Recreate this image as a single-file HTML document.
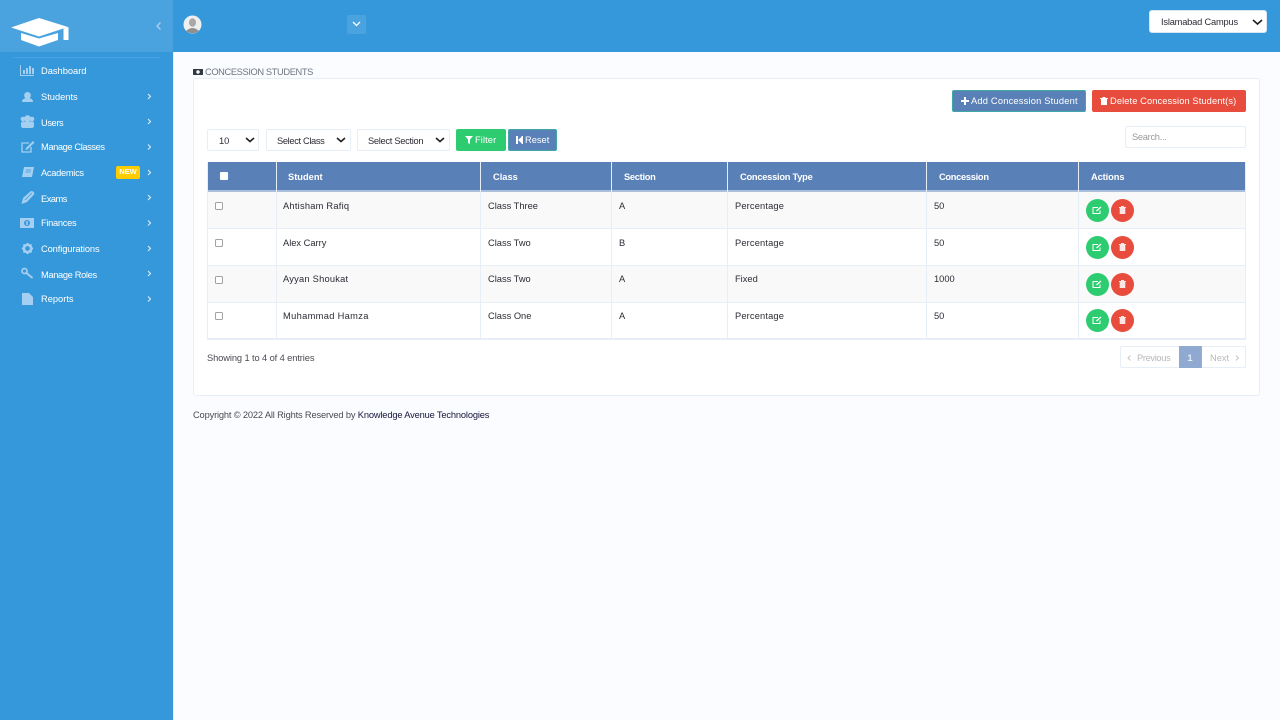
<!DOCTYPE html>
<html><head><meta charset="utf-8"><title>Concession Students</title>
<style>
*{box-sizing:border-box}
html,body{margin:0;padding:0}
body{width:1280px;height:720px;overflow:hidden;background:#fafcff;font-family:"Liberation Sans",sans-serif;font-size:9.3px;color:#2b2b35;position:relative}
.a{position:absolute}
.t{position:absolute;white-space:nowrap;line-height:14px}
.m{color:#fff}
.sel{position:absolute;background:#fff;border:1px solid #e8eef5;border-radius:2px}
.th{position:absolute;top:170px;color:#fff;font-weight:bold;line-height:14px;white-space:nowrap}
.ck{position:absolute;width:8px;height:8px;border:1px solid #a2a2a2;border-radius:1.5px;background:#fff;left:215px}
.c{position:absolute;width:23px;height:23px;border-radius:50%}
svg{position:absolute;overflow:visible}
.i{fill:#a5cff0}
.ch{fill:none;stroke:#dcecf8;stroke-width:1.1}
.sc{fill:none;stroke:#222;stroke-width:1.6}
</style></head><body>

<!-- sidebar -->
<div class="a" style="left:0;top:0;width:173px;height:720px;background:#3498db"></div>
<div class="a" style="left:0;top:0;width:173px;height:52px;background:#4aa3df"></div>
<div class="a" style="left:13px;top:57px;width:147px;height:1px;background:#45a2e2"></div>
<div class="a" style="left:173px;top:52px;width:1px;height:668px;background:#e4ecf4"></div>
<!-- header -->
<div class="a" style="left:173px;top:0;width:1107px;height:52px;background:#3498db"></div>

<svg style="left:0;top:0" width="90" height="52">
<path fill="#fff" d="M11 27.500 L39 18 L68 27 L39 36.500Z"/>
<path fill="#fff" d="M21 33 L39 38.500 L58 33 L58 40 L39 46.500 L21 40Z"/>
<path fill="#fff" d="M63.500 28.500 L68.500 27 V40 H63.500Z"/>
</svg>
<svg style="left:155px;top:21px" width="8" height="10"><path d="M5.500 1.500 L2 5 L5.500 8.500" fill="none" stroke="#a9d3f0" stroke-width="1.300"/></svg>

<!-- avatar -->
<svg style="left:183px;top:15px" width="19" height="19"><circle cx="9.500" cy="9.500" r="9" fill="#efefef"/><ellipse cx="9.500" cy="7.500" rx="3.500" ry="4.300" fill="#a8a8a8"/><path d="M3 16 Q9.500 10 16 16 Q9.500 20.500 3 16Z" fill="#8f8f8f"/></svg>
<div class="a" style="left:347px;top:15px;width:19px;height:19px;background:#4aa3df;border-radius:2px"></div>
<svg style="left:352px;top:21px" width="9" height="6"><path d="M1 1 L4.500 4.500 L8 1" fill="none" stroke="#fff" stroke-width="1.300"/></svg>

<!-- campus select -->
<div class="a" style="left:1149px;top:10px;width:118px;height:23px;background:#fff;border:1px solid #d7e6f2;border-radius:3px"></div>
<div class="t" style="left:1161px;top:15px;letter-spacing:-.2px">Islamabad Campus</div>
<svg style="left:1252px;top:18.500px" width="11" height="7"><path class="sc" d="M1 1 L5.500 5 L10 1"/></svg>

<!-- sidebar items -->
<div class="t m" style="left:41px;top:64px">Dashboard</div>
<div class="t m" style="left:41px;top:90px">Students</div>
<div class="t m" style="left:41px;top:116px;letter-spacing:-.4px">Users</div>
<div class="t m" style="left:41px;top:140px;letter-spacing:-.4px">Manage Classes</div>
<div class="t m" style="left:41px;top:166px;letter-spacing:-.3px">Academics</div>
<div class="t m" style="left:41px;top:192px;letter-spacing:-.5px">Exams</div>
<div class="t m" style="left:41px;top:216px;letter-spacing:-.3px">Finances</div>
<div class="t m" style="left:41px;top:242px;letter-spacing:-.1px">Configurations</div>
<div class="t m" style="left:41px;top:268px;letter-spacing:-.35px">Manage Roles</div>
<div class="t m" style="left:41px;top:292px">Reports</div>

<div class="a" style="left:116px;top:166px;width:24px;height:13px;background:#fc0;border-radius:2px;color:#fff;font-size:7.500px;font-weight:bold;text-align:center;line-height:12px">NEW</div>

<svg style="left:0;top:55px" width="173" height="260">
<!-- dashboard -->
<path fill="none" stroke="#a5cff0" d="M20.500 10 V20.500 H34"/>
<path class="i" d="M23 15h2v4h-2zM26 13h2v6h-2zM29 11h2v8h-2zM32 13h2v6h-2z"/>
<!-- students -->
<circle class="i" cx="27.500" cy="40.400" r="3.400"/><path class="i" d="M22 47 Q22 43 27.500 43 Q33 43 33 47Z"/>
<!-- users -->
<circle class="i" cx="27.500" cy="63.500" r="3.300"/><circle class="i" cx="23" cy="64" r="2.300"/><circle class="i" cx="32" cy="64" r="2.300"/><path class="i" d="M21 69 Q21 66 24 66.500 H31 Q34 66 34 69 V71 Q34 73 31 73 H24 Q21 73 21 71Z"/>
<!-- manage classes -->
<g transform="translate(0,2)"><path fill="none" stroke="#a5cff0" stroke-width="1.300" d="M31 90 V95 H22 V86 H29"/><path class="i" d="M26 91 L33 84 L34.500 85.500 L27.500 92.500 L25.500 93Z"/></g>
<!-- academics -->
<path class="i" d="M24 112 H34 L32 122 H22 Z"/><path fill="none" stroke="#3498db" stroke-width=".7" d="M26 115 H31 M25.500 117 H30.500"/>
<!-- exams -->
<path class="i" d="M21.500 149 L23 143 L31 136 Q34 136 34.500 139 L27 147Z"/><path fill="none" stroke="#3498db" stroke-width=".7" d="M25 145 L32 138"/>
<!-- finances -->
<rect class="i" x="20" y="163" width="14" height="10"/><circle cx="27" cy="168" r="3" fill="#3498db"/><rect x="26.200" y="166" width="1.500" height="4" fill="#a5cff0"/>
<!-- config -->
<circle cx="27.500" cy="193.500" r="3.600" fill="none" stroke="#a5cff0" stroke-width="2.500"/><circle class="i" cx="27.500" cy="189" r="1.200"/><circle class="i" cx="27.500" cy="198" r="1.200"/><circle class="i" cx="23" cy="193.500" r="1.200"/><circle class="i" cx="32" cy="193.500" r="1.200"/><circle class="i" cx="24.300" cy="190.300" r="1.200"/><circle class="i" cx="30.700" cy="190.300" r="1.200"/><circle class="i" cx="24.300" cy="196.700" r="1.200"/><circle class="i" cx="30.700" cy="196.700" r="1.200"/>
<!-- roles -->
<circle cx="24.500" cy="216" r="2.500" fill="none" stroke="#a5cff0" stroke-width="1.700"/><path fill="none" stroke="#a5cff0" stroke-width="2" d="M26.500 218 L32.500 223"/>
<!-- reports -->
<path class="i" d="M22 238 H29 L33 242 V250 H22Z"/>
<g class="ch">
<path d="M148 39 L150.500 41.500 L148 44"/>
<path d="M148 64 L150.500 66.500 L148 69"/>
<path d="M148 89.500 L150.500 92 L148 94.500"/>
<path d="M148 115 L150.500 117.500 L148 120"/>
<path d="M148 140 L150.500 142.500 L148 145"/>
<path d="M148 165.500 L150.500 168 L148 170.500"/>
<path d="M148 191 L150.500 193.500 L148 196"/>
<path d="M148 216 L150.500 218.500 L148 221"/>
<path d="M148 241.500 L150.500 244 L148 246.500"/>
</g>
</svg>

<!-- title -->
<svg style="left:193px;top:69px" width="10" height="6"><rect width="10" height="6" rx=".5" fill="#2f3a45"/><circle cx="5" cy="3" r="1.700" fill="#fff"/></svg>
<div class="t" style="left:205px;top:65px;color:#6f7680;letter-spacing:-.38px">CONCESSION STUDENTS</div>

<!-- card -->
<div class="a" style="left:193px;top:78px;width:1067px;height:318px;background:#fff;border:1px solid #e8eef5;border-radius:3px"></div>

<!-- top buttons -->
<div class="a" style="left:952px;top:90px;width:134px;height:22px;background:#5a80b8;border:1px solid #3fa7a5;border-radius:2px"></div>
<svg style="left:961px;top:97px" width="8" height="8"><path fill="#fff" d="M3 0h2v3h3v2H5v3H3V5H0V3h3z"/></svg>
<div class="t" style="left:971px;top:94px;color:#fff;letter-spacing:.2px">Add Concession Student</div>
<div class="a" style="left:1092px;top:90px;width:154px;height:22px;background:#e74c3c;border-radius:2px"></div>
<svg style="left:1100px;top:97px" width="8" height="8"><path fill="#fff" d="M0 1h8v1H7v6H1V2H0zM2.500 0h3v1h-3z"/></svg>
<div class="t" style="left:1110px;top:94px;color:#fff;letter-spacing:.1px">Delete Concession Student(s)</div>

<!-- search -->
<div class="sel" style="left:1125px;top:126px;width:121px;height:22px"></div>
<div class="t" style="left:1132px;top:130px;color:#9a9a9a;letter-spacing:-.3px">Search...</div>

<!-- filters -->
<div class="sel" style="left:207px;top:129px;width:52px;height:22px"></div>
<div class="t" style="left:219px;top:134px">10</div>
<svg style="left:245px;top:137px" width="10" height="6"><path class="sc" d="M1 1 L5 4.500 L9 1"/></svg>
<div class="sel" style="left:266px;top:129px;width:85px;height:22px"></div>
<div class="t" style="left:277px;top:134px;letter-spacing:-.35px">Select Class</div>
<svg style="left:336px;top:137px" width="10" height="6"><path class="sc" d="M1 1 L5 4.500 L9 1"/></svg>
<div class="sel" style="left:357px;top:129px;width:93px;height:22px"></div>
<div class="t" style="left:368px;top:134px;letter-spacing:-.3px">Select Section</div>
<svg style="left:435px;top:137px" width="10" height="6"><path class="sc" d="M1 1 L5 4.500 L9 1"/></svg>

<div class="a" style="left:456px;top:129px;width:50px;height:22px;background:#2ecc71;border-radius:2px"></div>
<svg style="left:465px;top:136px" width="8" height="8"><path fill="#fff" d="M0 0h8L5 3.500V8L3 7V3.500z"/></svg>
<div class="t" style="left:475px;top:133px;color:#fff;letter-spacing:.1px">Filter</div>
<div class="a" style="left:508px;top:129px;width:49px;height:22px;background:#5a80b8;border:1px solid #3fa7a5;border-radius:2px"></div>
<svg style="left:516px;top:136px" width="8" height="8"><path fill="#fff" d="M0 0h2v8H0zM2 4 L6.500 0v8z"/><path fill="#fff" d="M5.500 0h1.500v8H5.500z"/></svg>
<div class="t" style="left:525px;top:133px;color:#fff">Reset</div>

<!-- table head -->
<div class="a" style="left:208px;top:162px;width:1038px;height:30px;background:#5a80b8;border-bottom:2px solid #a9bfdc"></div>
<div class="a" style="left:220px;top:172px;width:8px;height:8px;background:#fff;border-radius:1px"></div>
<div class="th" style="left:288px">Student</div>
<div class="th" style="left:493px">Class</div>
<div class="th" style="left:624px;letter-spacing:-.3px">Section</div>
<div class="th" style="left:740px;letter-spacing:-.25px">Concession Type</div>
<div class="th" style="left:939px;letter-spacing:-.3px">Concession</div>
<div class="th" style="left:1091px;letter-spacing:-.1px">Actions</div>

<!-- rows -->
<div class="a" style="left:208px;top:192px;width:1038px;height:37px;background:#f9f9f9"></div>
<div class="a" style="left:208px;top:265px;width:1038px;height:37px;background:#f9f9f9"></div>
<div class="a" style="left:208px;top:228px;width:1038px;height:1px;background:#e8eef5"></div>
<div class="a" style="left:208px;top:265px;width:1038px;height:1px;background:#e8eef5"></div>
<div class="a" style="left:208px;top:302px;width:1038px;height:1px;background:#e8eef5"></div>
<div class="a" style="left:208px;top:338px;width:1038px;height:2px;background:#e8eef5"></div>

<!-- column lines -->
<div class="a" style="left:207px;top:162px;width:1px;height:178px;background:#e8eef5"></div>
<div class="a" style="left:1245px;top:162px;width:1px;height:178px;background:#e8eef5"></div>
<div class="a" style="left:276px;top:162px;width:1px;height:177px;background:#e8eef5"></div>
<div class="a" style="left:480px;top:162px;width:1px;height:177px;background:#e8eef5"></div>
<div class="a" style="left:611px;top:162px;width:1px;height:177px;background:#e8eef5"></div>
<div class="a" style="left:727px;top:162px;width:1px;height:177px;background:#e8eef5"></div>
<div class="a" style="left:926px;top:162px;width:1px;height:177px;background:#e8eef5"></div>
<div class="a" style="left:1078px;top:162px;width:1px;height:177px;background:#e8eef5"></div>

<div class="ck" style="top:202px"></div>
<div class="t" style="left:283px;top:199px;letter-spacing:.23px">Ahtisham Rafiq</div>
<div class="t" style="left:488px;top:199px">Class Three</div>
<div class="t" style="left:619px;top:199px">A</div>
<div class="t" style="left:735px;top:199px;letter-spacing:.15px">Percentage</div>
<div class="t" style="left:934px;top:199px">50</div>

<div class="ck" style="top:239px"></div>
<div class="t" style="left:283px;top:236px">Alex Carry</div>
<div class="t" style="left:488px;top:236px">Class Two</div>
<div class="t" style="left:619px;top:236px">B</div>
<div class="t" style="left:735px;top:236px;letter-spacing:.15px">Percentage</div>
<div class="t" style="left:934px;top:236px">50</div>

<div class="ck" style="top:276px"></div>
<div class="t" style="left:283px;top:272px;letter-spacing:.23px">Ayyan Shoukat</div>
<div class="t" style="left:488px;top:272px">Class Two</div>
<div class="t" style="left:619px;top:272px">A</div>
<div class="t" style="left:735px;top:272px">Fixed</div>
<div class="t" style="left:934px;top:272px">1000</div>

<div class="ck" style="top:312px"></div>
<div class="t" style="left:283px;top:309px;letter-spacing:.33px">Muhammad Hamza</div>
<div class="t" style="left:488px;top:309px">Class One</div>
<div class="t" style="left:619px;top:309px">A</div>
<div class="t" style="left:735px;top:309px;letter-spacing:.15px">Percentage</div>
<div class="t" style="left:934px;top:309px">50</div>

<!-- action buttons -->
<div class="c" style="left:1086px;top:199px;background:#2ecc71"></div><div class="c" style="left:1111px;top:199px;background:#e74c3c"></div>
<div class="c" style="left:1086px;top:236px;background:#2ecc71"></div><div class="c" style="left:1111px;top:236px;background:#e74c3c"></div>
<div class="c" style="left:1086px;top:273px;background:#2ecc71"></div><div class="c" style="left:1111px;top:273px;background:#e74c3c"></div>
<div class="c" style="left:1086px;top:309px;background:#2ecc71"></div><div class="c" style="left:1111px;top:309px;background:#e74c3c"></div>
<svg style="left:0;top:0" width="1280" height="340">
<g fill="none" stroke="#fff" stroke-width="1">
<path d="M1100 210.500 V213.500 H1093 V207.500 H1098"/><path d="M1100 247.500 V250.500 H1093 V244.500 H1098"/><path d="M1100 284.500 V287.500 H1093 V281.500 H1098"/><path d="M1100 320.500 V323.500 H1093 V317.500 H1098"/>
<path d="M1096.500 211 L1101 207M1096.500 248 L1101 244M1096.500 285 L1101 281M1096.500 321 L1101 317" stroke-width="1.300"/>
</g>
<g fill="#fde6e6">
<path d="M1119 207h7v1h-.7v6h-5.600v-6h-.7zM1121 206h3v1h-3z"/>
<path d="M1119 244h7v1h-.7v6h-5.600v-6h-.7zM1121 243h3v1h-3z"/>
<path d="M1119 281h7v1h-.7v6h-5.600v-6h-.7zM1121 280h3v1h-3z"/>
<path d="M1119 317h7v1h-.7v6h-5.600v-6h-.7zM1121 316h3v1h-3z"/>
</g>
</svg>

<!-- footer of table -->
<div class="t" style="left:207px;top:351px;color:#4a4a52;letter-spacing:-.1px">Showing 1 to 4 of 4 entries</div>

<div class="a" style="left:1120px;top:346px;width:126px;height:22px;background:#fff;border:1px solid #e8eef5;border-radius:2px"></div>
<div class="a" style="left:1179px;top:346px;width:23px;height:22px;background:#8fa9d0;border-right:1px solid #7cc0c4;color:#e8eef7;font-weight:bold;text-align:center;line-height:24px">1</div>
<svg style="left:1127px;top:355px" width="5" height="6"><path d="M3.500 .5 L1 3 L3.500 5.500" fill="none" stroke="#c4c4c4"/></svg>
<div class="t" style="left:1137px;top:351px;color:#b9b9b9;letter-spacing:-.35px">Previous</div>
<div class="t" style="left:1210px;top:351px;color:#b9b9b9">Next</div>
<svg style="left:1235px;top:355px" width="5" height="6"><path d="M1 .5 L3.500 3 L1 5.500" fill="none" stroke="#c4c4c4"/></svg>

<div class="t" style="left:193px;top:408px;color:#4a4a52;letter-spacing:-.16px">Copyright © 2022 All Rights Reserved by <span style="color:#16163a">Knowledge Avenue Technologies</span></div>

</body></html>
